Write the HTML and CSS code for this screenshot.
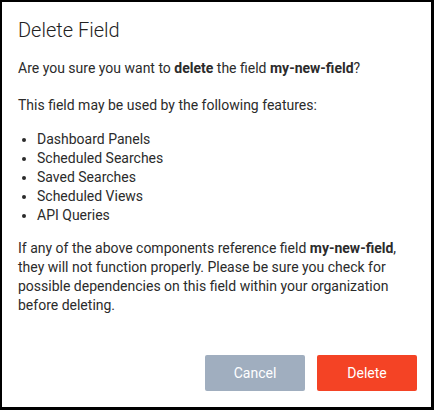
FILE: index.html
```html
<!DOCTYPE html>
<html>
<head>
<meta charset="utf-8">
<link rel="stylesheet" href="styles.css">
</head>
<body>
<div class="dialog">
  <h1 class="title">Delete Field</h1>
  <div class="content">
    <p class="q">Are you sure you want to <b>delete</b> the field <b>my-new-field</b>?</p>
    <p class="intro">This field may be used by the following features:</p>
    <ul class="features">
      <li>Dashboard Panels</li>
      <li>Scheduled Searches</li>
      <li>Saved Searches</li>
      <li>Scheduled Views</li>
      <li>API Queries</li>
    </ul>
    <p class="warn">If any of the above components reference field <b>my-new-field</b>, they will not function properly. Please be sure you check for possible dependencies on this field within your organization before deleting.</p>
  </div>
  <div class="actions">
    <button class="btn cancel">Cancel</button>
    <button class="btn delete">Delete</button>
  </div>
</div>
</body>
</html>
```
FILE: styles.css
```css
html, body {
  margin: 0;
  padding: 0;
  background: #000;
  height: 100%;
}
body {
  font-family: Roboto, "Liberation Sans", sans-serif;
  color: #2b2b2b;
}
.dialog {
  box-sizing: border-box;
  margin: 2px 3px 0 2px;
  height: 405px;
  background: #fff;
  padding: 0 14px 0 16px;
  display: flex;
  flex-direction: column;
}
.title {
  margin: 16px 0 0 0;
  font-size: 20px;
  font-weight: 300;
  line-height: 24px;
  color: #222;
}
.content {
  font-size: 14px;
  line-height: 19px;
}
.content p {
  margin: 0;
}
.q { margin-top: 17px !important; }
.intro { margin-top: 18px !important; }
.features {
  margin: 15px 0 0 0;
  padding-left: 19px;
}
.warn { margin-top: 14px !important; }
b { font-weight: 700; }
.actions {
  margin-top: auto;
  margin-bottom: 16px;
  display: flex;
  justify-content: flex-end;
  gap: 12px;
}
.btn {
  width: 100px;
  height: 36px;
  border: none;
  border-radius: 2px;
  color: #fff;
  font-family: Roboto, "Liberation Sans", sans-serif;
  font-size: 14px;
  padding: 0;
}
.cancel { background: #a0aebf; }
.delete { background: #f44325; }
```
